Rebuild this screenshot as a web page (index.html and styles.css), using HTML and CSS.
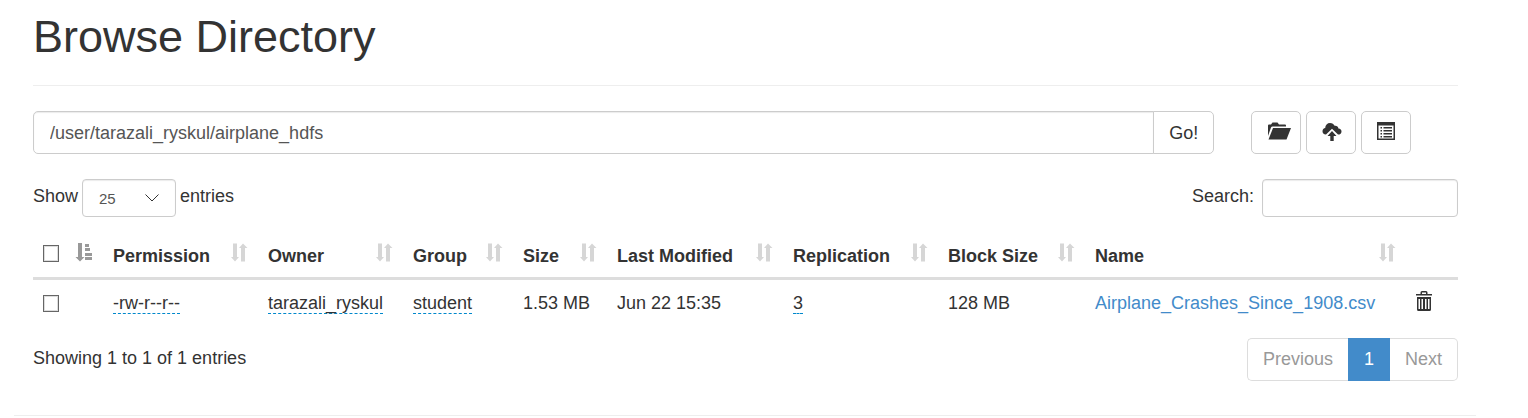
FILE: index.html
```html
<!DOCTYPE html>
<html lang="en">
<head>
<meta charset="utf-8">
<title>Browsing HDFS</title>
<link rel="stylesheet" href="styles.css">
</head>
<body>
<svg class="symbols" aria-hidden="true">
  <symbol id="sort" viewBox="0 0 18 19">
    <path d="M3 .5h4v13.500h2L5 18.500 1 14h2zM11 18.500V5H9L13 .5 17.500 5H15v13.500z"/>
  </symbol>
  <symbol id="sort-asc" viewBox="0 0 18 19">
    <path d="M3 0h4v14h2.500L5 18.500.5 14H3zM10 1h4v3h-4zM10 5h5v3h-5zM10 10h7v3h-7zM10 14h7v3h-7z"/>
  </symbol>
</svg>
<main class="container">
  <header class="page-header"><h1 class="title">Browse Directory</h1></header>

  <div class="row">
    <form class="path-form">
      <input class="control path-input" type="text" aria-label="Directory" value="/user/tarazali_ryskul/airplane_hdfs">
      <button class="btn btn-go" type="button">Go!</button>
    </form>
    <div class="actions">
      <button class="btn btn-icon" type="button" aria-label="Create directory">
        <svg class="icon-folder" viewBox="0 0 24 18"><path d="M1 14V3.500Q1 2.500 2 2.500H4L5.500.5H10.500L12 2.500H18Q19 2.500 19 3.500V4.500H5.500Q4.500 4.500 4 5.500zM6 6H24L19.500 17.500H1.500z"/></svg>
      </button>
      <button class="btn btn-icon" type="button" aria-label="Upload files">
        <svg class="icon-upload" viewBox="0 0 20 20"><path d="M4 12.500C1.500 12.500.5 11 .5 9.200.5 7.500 1.700 6.300 3.200 6.100 3.300 3 5.300 1 8 1c2.300 0 3.800 1.100 4.600 2.800 2-.4 3.600.8 3.800 2.600C18.500 6.500 19.500 7.700 19.500 9.400c0 1.900-1.200 3.100-3.500 3.100L10 6.700z"/><path d="M10 9l4.500 5h-2.800V19H8.300V14H5.500z"/></svg>
      </button>
      <button class="btn btn-icon" type="button" aria-label="Cut and paste">
        <svg class="icon-list" viewBox="0 0 18 18"><path fill-rule="evenodd" d="M0 0h18v18H0zM1.500 3.500v13h15v-13z"/><path d="M3.500 5h1.500v1.500h-1.500zM3.500 8h1.500v1.500h-1.500zM3.500 11h1.500v1.500h-1.500zM3.500 14h1.500v1.500h-1.500zM6.500 5h8.500v1.500h-8.500zM6.500 8h8.500v1.500h-8.500zM6.500 11h8.500v1.500h-8.500zM6.500 14h8.500v1.500h-8.500z"/></svg>
      </button>
    </div>
  </div>

  <div class="filters">
    <label class="field">Show
      <span class="select-wrap">
        <select class="control small length"><option>25</option><option>50</option><option>100</option></select>
        <svg class="chevron" viewBox="0 0 14 8"><path d="M.5.500 7 7 13.500.5"/></svg>
      </span>
      entries</label>
    <label class="field search">Search: <input class="control small search-input" type="search"></label>
  </div>

  <table class="files">
    <colgroup><col class="c-check"><col class="c-perm"><col class="c-owner"><col class="c-group"><col class="c-size"><col class="c-modified"><col class="c-repl"><col class="c-block"><col class="c-name"><col class="c-trash"></colgroup>
    <thead>
      <tr>
        <th><input class="check" type="checkbox" aria-label="Select all"><svg class="sort active"><use href="#sort-asc"/></svg></th>
        <th>Permission<svg class="sort"><use href="#sort"/></svg></th>
        <th>Owner<svg class="sort"><use href="#sort"/></svg></th>
        <th>Group<svg class="sort"><use href="#sort"/></svg></th>
        <th>Size<svg class="sort"><use href="#sort"/></svg></th>
        <th>Last Modified<svg class="sort"><use href="#sort"/></svg></th>
        <th>Replication<svg class="sort"><use href="#sort"/></svg></th>
        <th>Block Size<svg class="sort"><use href="#sort"/></svg></th>
        <th>Name<svg class="sort"><use href="#sort"/></svg></th>
        <th></th>
      </tr>
    </thead>
    <tbody>
      <tr>
        <td><input class="check" type="checkbox" aria-label="Select file"></td>
        <td><span class="editable">-rw-r--r--</span></td>
        <td><span class="editable">tarazali_ryskul</span></td>
        <td><span class="editable">student</span></td>
        <td>1.53 MB</td>
        <td>Jun 22 15:35</td>
        <td><span class="editable">3</span></td>
        <td>128 MB</td>
        <td><a class="link" href="#">Airplane_Crashes_Since_1908.csv</a></td>
        <td><button class="trash" type="button" aria-label="Delete"><svg class="icon-trash" viewBox="0 0 16 20"><path fill-rule="evenodd" d="M0 3h4.500V1.500Q4.500 0 6 0h4Q11.500 0 11.500 1.500V3H16v1.500H0zM6 1.500V3h4V1.500zM1 6h14v12.500q0 1.500-1.500 1.500h-11Q1 20 1 18.500zM2.500 8v10H4V8zM5.500 8v10H7V8zM9 8v10h1.500V8zM12 8v10h1.500V8z"/></svg></button></td>
      </tr>
    </tbody>
  </table>

  <div class="table-footer">
    <div class="info">Showing 1 to 1 of 1 entries</div>
    <nav class="pagination" aria-label="Pages">
      <a class="page" href="#">Previous</a><a class="page current" href="#">1</a><a class="page" href="#">Next</a>
    </nav>
  </div>
  <hr class="rule">
</main>
</body>
</html>
```
FILE: styles.css
```css
* { box-sizing: border-box; }
body {
  margin: 0;
  background: #fff;
  color: #333;
  font: 18px/25px "Liberation Sans", Arial, sans-serif;
}
.symbols { display: none; }
svg { fill: currentColor; }
.container { margin: 0 52px 0 14px; padding: 12px 18px 0 19px; }
.page-header { padding-bottom: 23px; border-bottom: 1px solid #eee; }
.title { margin: 0; font-size: 45px; font-weight: 400; line-height: 50px; }

.row {
  display: grid;
  grid-template-columns: 10fr 2fr;
  margin: 25px -18px 0 -19px;
}
.path-form { display: flex; padding: 0 18px 0 19px; }
.control {
  height: 43px;
  padding: 1px 16px 0;
  border: 1px solid #ccc;
  border-radius: 5px;
  background: #fff;
  box-shadow: inset 0 1px 1px rgba(0, 0, 0, .08);
  color: #555;
  font: inherit;
}
.path-input { flex: 1; min-width: 0; border-radius: 5px 0 0 5px; }
.btn {
  height: 43px;
  padding: 1px 15px 0;
  border: 1px solid #ccc;
  border-radius: 5px;
  background: #fff;
  color: #333;
  font: inherit;
}
.btn-go { margin-left: -1px; border-radius: 0 5px 5px 0; }
.actions { display: flex; gap: 5px; padding: 0 18px 0 19px; }
.btn-icon {
  display: flex;
  justify-content: flex-start;
  width: 50px;
  padding: 10px 0 0 15px;
}
.icon-folder { width: 24px; height: 18px; }
.icon-upload { width: 20px; height: 20px; }
.icon-list { width: 18px; height: 18px; }

.filters { display: flex; justify-content: space-between; margin-top: 25px; }
.field { display: flex; align-items: flex-start; gap: 4px; line-height: 34px; }
.search { gap: 8px; }
.control.small { height: 38px; border-radius: 4px; font-size: 15px; }
.select-wrap { position: relative; height: 38px; }
.length { display: block; width: 94px; appearance: none; }
.chevron {
  position: absolute;
  top: 15px;
  right: 17px;
  width: 14px;
  height: 8px;
  fill: none;
  stroke: #333;
  pointer-events: none;
}
.search-input { width: 196px; }

.files {
  width: 100%;
  margin-top: 15px;
  border-collapse: collapse;
  table-layout: fixed;
}
.c-check { width: 70px; }
.c-perm, .c-repl { width: 155px; }
.c-owner { width: 145px; }
.c-group { width: 110px; }
.c-size { width: 94px; }
.c-modified { width: 176px; }
.c-block { width: 147px; }
.c-trash { width: 52px; }
th, td { text-align: left; white-space: nowrap; }
th {
  position: relative;
  padding: 12px 10px 8px;
  border-bottom: 3px solid #ddd;
}
td { padding: 11px 10px 10px; }
.sort {
  position: absolute;
  right: 10px;
  bottom: 15px;
  width: 18px;
  height: 19px;
  color: #d6d6d6;
}
.sort.active { color: #999; }
.check {
  display: block;
  width: 16px;
  height: 17px;
  margin: 0;
  appearance: none;
  border: 1px solid #666;
  background: #fff;
  box-shadow: inset 0 0 0 1px #ddd;
}
th .check { margin-bottom: 6px; }
.editable { border-bottom: 1px dashed #0088cc; }
.link { color: #428bca; text-decoration: none; }
.trash {
  display: block;
  margin-bottom: 5px;
  padding: 0;
  border: 0;
  background: none;
  color: #333;
}
.icon-trash { display: block; width: 16px; height: 20px; }

.table-footer {
  display: flex;
  align-items: flex-start;
  justify-content: space-between;
  margin-top: 12px;
}
.info { padding-top: 8px; }
.pagination { display: flex; }
.page {
  padding: 8px 15px;
  border: 1px solid #ddd;
  color: #999;
  text-decoration: none;
}
.page:first-child { border-right: 0; border-radius: 5px 0 0 5px; }
.page:last-child { border-left: 0; border-radius: 0 5px 5px 0; }
.page.current { border-color: #428bca; background: #428bca; color: #fff; }
.rule {
  margin: 34px -18px 0 -19px;
  border: 0;
  border-top: 1px solid #eee;
}
```
